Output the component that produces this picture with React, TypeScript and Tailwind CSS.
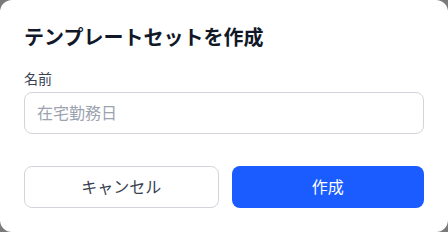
import React, { useState } from "react";

export default function App() {
  const [name, setName] = useState("");

  return (
    <div
      className="w-[448px] h-[232px] bg-[#7a7a7a]"
      style={{ fontFamily: 'Inter, "Noto Sans CJK JP", sans-serif' }}
    >
      <div className="h-full w-full bg-white rounded-xl px-6 pt-6 pb-6 flex flex-col">
        {/* Title */}
        <h2 className="text-xl leading-7 font-bold text-[#111827]">
          テンプレートセットを作成
        </h2>

        {/* Name field */}
        <div className="mt-[17px] flex flex-col">
          <label className="text-sm leading-5 text-[#374151]">名前</label>
          <input
            value={name}
            onChange={(e) => setName(e.target.value)}
            placeholder="在宅勤務日"
            className="mt-[3px] h-[42px] w-full rounded-lg border border-[#d1d5db] px-3 text-base text-[#111827] placeholder:text-[#9ca3af] outline-none"
          />
        </div>

        {/* Actions */}
        <div className="mt-auto flex gap-[13px]">
          <button className="flex-1 h-[42px] rounded-lg border border-[#d1d5db] bg-white text-base text-[#374151]">
            キャンセル
          </button>
          <button className="flex-1 h-[42px] rounded-lg bg-[#1a5cff] text-base text-white">
            作成
          </button>
        </div>
      </div>
    </div>
  );
}
